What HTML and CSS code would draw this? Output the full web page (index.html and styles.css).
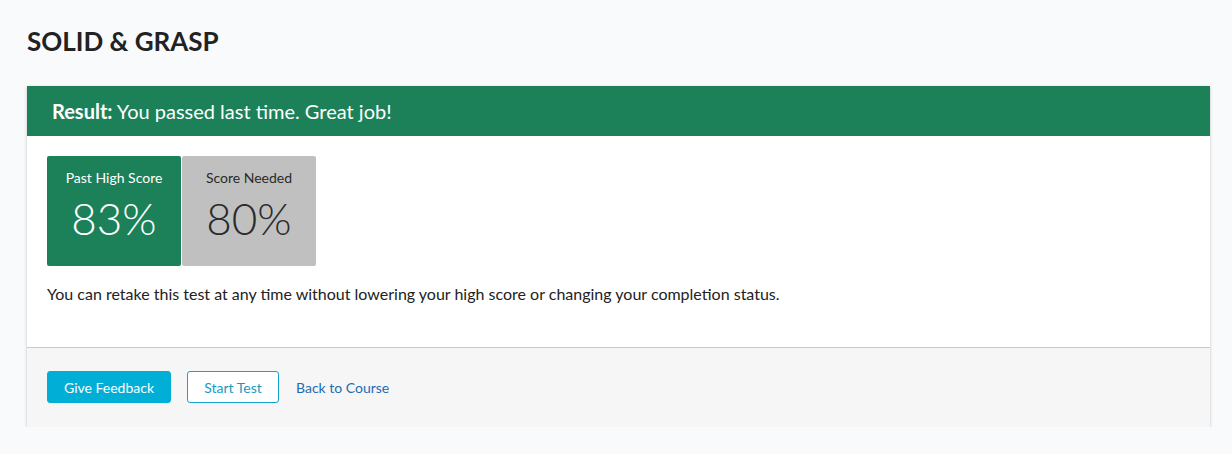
FILE: index.html
```html
<!DOCTYPE html>
<html>
<head>
<meta charset="utf-8">
<link rel="stylesheet" href="styles.css">
</head>
<body>
<div class="page">
  <h1 class="title">SOLID &amp; GRASP</h1>
  <div class="card">
    <div class="card-head"><strong>Result:</strong>&nbsp;You passed last time. Great job!</div>
    <div class="card-body">
      <div class="scores">
        <div class="score score-pass">
          <div class="score-label">Past High Score</div>
          <div class="score-value">83%</div>
        </div>
        <div class="score score-need">
          <div class="score-label">Score Needed</div>
          <div class="score-value">80%</div>
        </div>
      </div>
      <p class="note">You can retake this test at any time without lowering your high score or changing your completion status.</p>
    </div>
    <div class="card-foot">
      <button class="btn btn-primary">Give Feedback</button>
      <button class="btn btn-outline">Start Test</button>
      <a class="link" href="#">Back to Course</a>
    </div>
  </div>
</div>
</body>
</html>
```

FILE: styles.css
```css
html, body {
  margin: 0;
  padding: 0;
  background: #f9fafc;
  font-family: Lato, "Open Sans", sans-serif;
  color: #222;
}
.page {
  padding: 26px 22px 0 27px;
}
.title {
  margin: 0 0 30px 0;
  font-size: 26px;
  line-height: 30px;
  font-weight: 700;
  color: #222;
}
.card {
  background: #fff;
  box-shadow: 0 1px 3px rgba(0,0,0,0.22);
}
.card-head {
  background: #1c8159;
  color: #fff;
  height: 50px;
  display: flex;
  align-items: center;
  padding: 0 25px;
  font-size: 20px;
}
.card-head strong {
  font-weight: 700;
}
.card-body {
  padding: 20px 20px 44px 20px;
}
.scores {
  display: flex;
  gap: 1px;
}
.score {
  width: 134px;
  height: 110px;
  border-radius: 2px;
  display: flex;
  flex-direction: column;
  align-items: center;
  box-sizing: border-box;
  padding-top: 14px;
}
.score-pass {
  background: #1c8159;
  color: #fff;
}
.score-need {
  background: #c0c0c0;
  color: #2a2a2a;
}
.score-label {
  font-size: 14px;
  line-height: 16px;
}
.score-value {
  font-size: 44px;
  font-weight: 300;
  line-height: 52px;
  margin-top: 6px;
}
.note {
  margin: 18px 0 0 0;
  font-size: 16px;
  line-height: 19px;
  color: #222;
}
.card-foot {
  background: #f6f6f6;
  border-top: 1px solid #c8c8c8;
  padding: 23px 20px 24px 20px;
  display: flex;
  align-items: center;
}
.btn {
  font-family: Lato, "Open Sans", sans-serif;
  font-size: 14px;
  height: 32px;
  padding: 0;
  border-radius: 3px;
  cursor: pointer;
  box-sizing: border-box;
  white-space: nowrap;
}
.btn-primary {
  background: #00aed6;
  color: #fff;
  border: 1px solid #00aed6;
  width: 124px;
}
.btn-outline {
  background: #fff;
  color: #1a9ac3;
  border: 1px solid #14a3cf;
  margin-left: 16px;
  width: 92px;
}
.link {
  margin-left: 17px;
  font-size: 14px;
  color: #1d6cb5;
  text-decoration: none;
}
```
